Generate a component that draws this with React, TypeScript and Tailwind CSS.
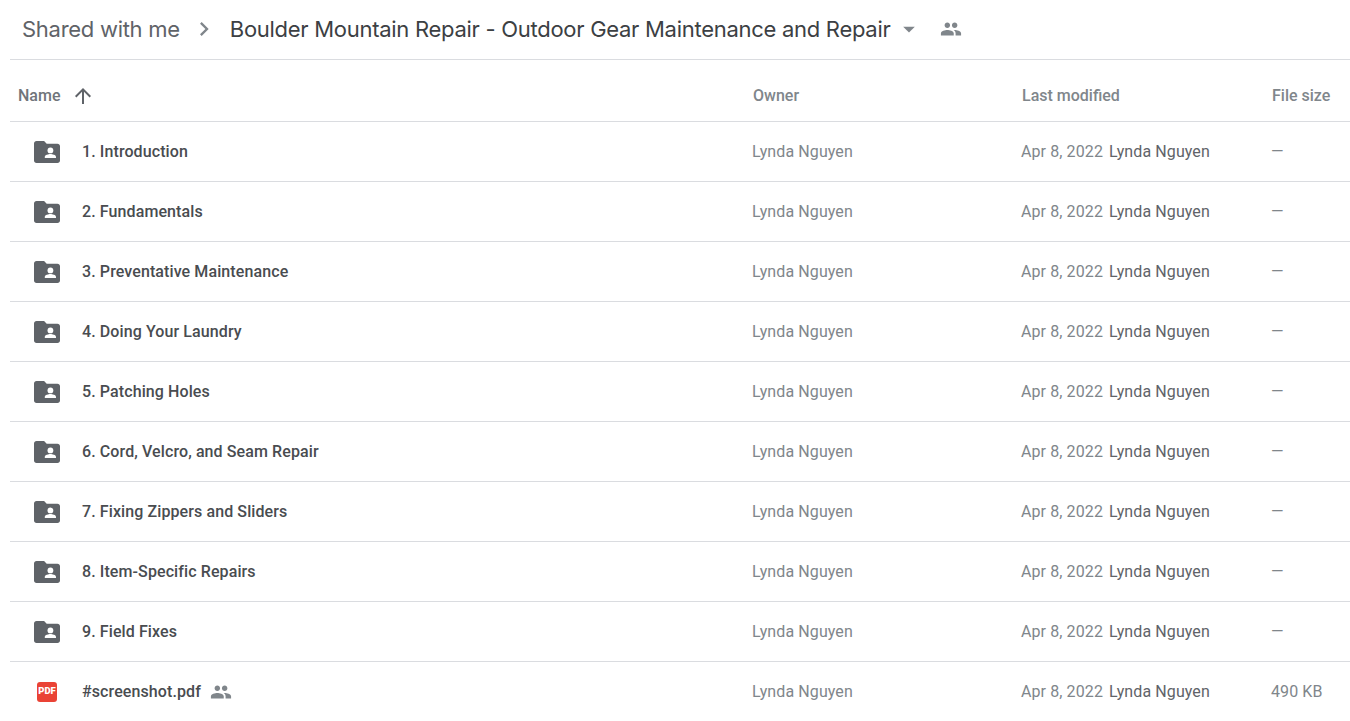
const files = [
  '1. Introduction',
  '2. Fundamentals',
  '3. Preventative Maintenance',
  '4. Doing Your Laundry',
  '5. Patching Holes',
  '6. Cord, Velcro, and Seam Repair',
  '7. Fixing Zippers and Sliders',
  '8. Item-Specific Repairs',
  '9. Field Fixes',
];

function SharedIcon({ className }: { className: string }) {
  return (
    <svg viewBox="0 0 24 24" className={className} fill="currentColor">
      <path d="M16 11c1.66 0 2.99-1.34 2.99-3S17.66 5 16 5s-3 1.34-3 3 1.34 3 3 3zm-8 0c1.66 0 2.99-1.34 2.99-3S9.66 5 8 5 5 6.34 5 8s1.34 3 3 3zm0 2c-2.33 0-7 1.17-7 3.5V19h14v-2.5c0-2.33-4.67-3.5-7-3.5zm8 0c-.29 0-.62.02-.97.05 1.16.84 1.97 1.97 1.97 3.45V19h6v-2.5c0-2.33-4.67-3.5-7-3.5z" />
    </svg>
  );
}

function FolderIcon() {
  return (
    <svg viewBox="0 0 26 22" className="h-[22px] w-[26px] text-[#5f6368]" fill="currentColor">
      <path d="M2.5 0h7.6l2.6 2.8h10.8c1.4 0 2.5 1.1 2.5 2.5v14.2c0 1.4-1.1 2.5-2.5 2.5h-21C1.1 22 0 20.9 0 19.5v-17C0 1.1 1.1 0 2.5 0z" />
      <circle cx="16.4" cy="9.4" r="2.9" fill="#fff" />
      <path d="M10.8 17v-1.2c0-1.9 3.7-2.8 5.6-2.8s5.6.9 5.6 2.8V17z" fill="#fff" />
    </svg>
  );
}

function Row({ name, icon, shared, size }: { name: string; icon: React.ReactNode; shared?: boolean; size: string }) {
  return (
    <div className="flex h-[60px] shrink-0 items-center border-b border-[#dadce0] text-[16px] tracking-[0.1px] text-[#80868b]">
      <div className="flex w-[72px] shrink-0 justify-center pl-[2px]">{icon}</div>
      <div className="flex w-[670px] shrink-0 items-center font-medium text-[#494c50]">
        {name}
        {shared && <SharedIcon className="ml-[9px] h-[22px] w-[22px] text-[#80868b]" />}
      </div>
      <div className="w-[269px] shrink-0">Lynda Nguyen</div>
      <div className="flex w-[250px] shrink-0 gap-[6px]">
        <span>Apr 8, 2022</span>
        <span className="text-[#5f6368]">Lynda Nguyen</span>
      </div>
      <div>{size}</div>
    </div>
  );
}

export default function App() {
  return (
    <div className="h-[721px] w-[1350px] overflow-hidden bg-white pl-[10px] font-['Roboto',sans-serif]">
      <div className="flex h-[60px] items-center border-b border-[#dadce0] pb-[1px] font-['Inter',sans-serif] text-[22px]">
        <span className="ml-[12px] tracking-[-0.28px] text-[#5f6368]">Shared with me</span>
        <svg viewBox="0 0 24 24" className="ml-[10px] h-[28px] w-[28px] text-[#80868b]" fill="currentColor">
          <path d="M10 6 8.6 7.4l4.6 4.6-4.6 4.6L10 18l6-6z" />
        </svg>
        <span className="ml-[12px] tracking-[-0.28px] text-[#3c4043]">
          Boulder Mountain Repair - Outdoor Gear Maintenance and Repair
        </span>
        <svg viewBox="0 0 24 24" className="ml-[4px] h-[28px] w-[28px] text-[#80868b]" fill="currentColor">
          <path d="M7 10l5 5 5-5z" />
        </svg>
        <SharedIcon className="ml-[17px] h-[22px] w-[22px] text-[#80868b]" />
      </div>
      <div className="flex h-[62px] items-center border-b border-[#dadce0] pt-[10px] text-[16px] font-medium text-[#80868b]">
        <div className="flex w-[743px] shrink-0 items-center pl-2 text-[#70757a]">
          Name
          <svg viewBox="0 0 24 24" className="ml-[11px] h-[24px] w-[24px] text-[#5f6368]" fill="currentColor">
            <path d="M4 12l1.41 1.41L11 7.83V20h2V7.83l5.58 5.59L20 12l-8-8-8 8z" />
          </svg>
        </div>
        <div className="w-[269px] shrink-0">Owner</div>
        <div className="w-[250px] shrink-0">Last modified</div>
        <div>File size</div>
      </div>
      {files.map((name) => (
        <Row key={name} name={name} icon={<FolderIcon />} size="—" />
      ))}
      <Row
        name="#screenshot.pdf"
        shared
        size="490 KB"
        icon={
          <div className="flex h-5 w-5 items-center justify-center rounded-[3px] bg-[#ea4335] text-[9.5px] font-black tracking-normal text-white">
            PDF
          </div>
        }
      />
    </div>
  );
}
